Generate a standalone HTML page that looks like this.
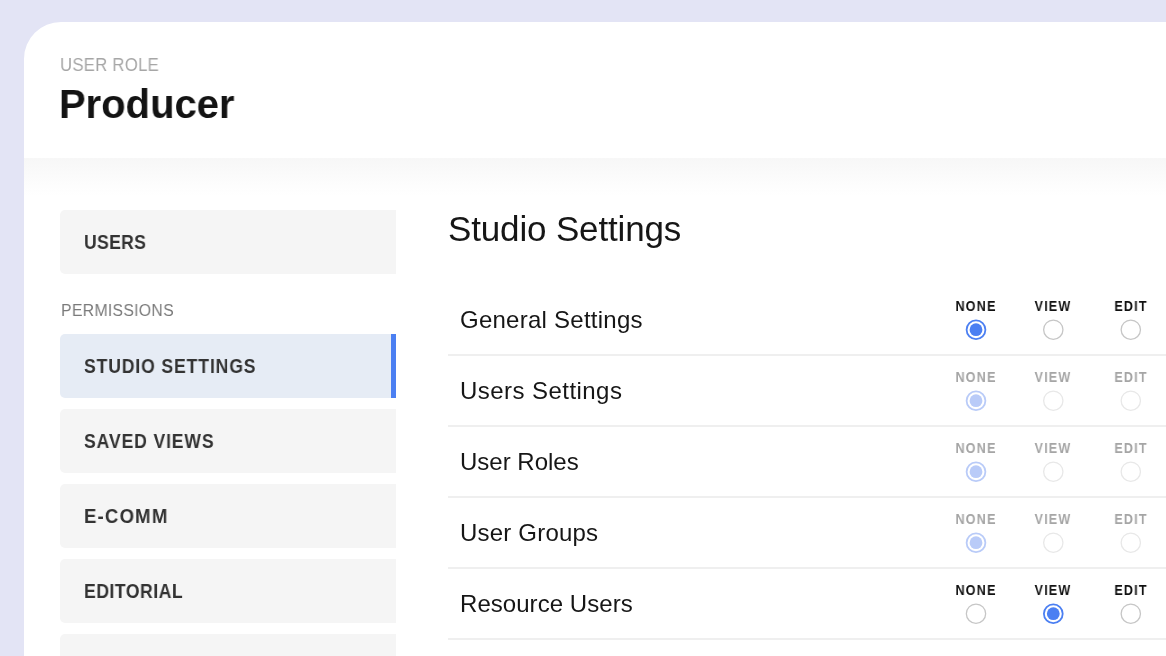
<!DOCTYPE html>
<html><head><meta charset="utf-8">
<style>
*{margin:0;padding:0;box-sizing:border-box}
html,body{width:1166px;height:656px;overflow:hidden}
body{background:#e3e4f5;font-family:"Liberation Sans",sans-serif;position:relative}
.card{position:absolute;left:24px;top:22px;width:1200px;height:700px;background:#fff;border-top-left-radius:37px;overflow:hidden}
.band{position:absolute;left:0;top:136px;width:100%;height:38px;background:linear-gradient(#f7f7f7,#fff)}
.abs{position:absolute;white-space:nowrap}
.t{will-change:transform}
.lbl{left:36px;top:32px;font-size:18.5px;color:#a6a6a6;line-height:22px;letter-spacing:0.3px;transform:scaleX(0.903);transform-origin:0 0}
.title{left:35px;top:59px;font-size:41px;font-weight:bold;color:#131313;line-height:46px;transform:scaleX(0.975);transform-origin:0 0}
.nav{position:absolute;left:36px;width:336px;height:64px;background:#f5f5f5;border-radius:5px 0 0 5px}
.nav span{position:absolute;left:24px;top:19.5px;font-weight:bold;font-size:19.5px;color:#333;line-height:24px;white-space:nowrap;transform-origin:0 0}
.nav.active{background:#e6ecf5}
.nav.active::after{content:"";position:absolute;right:0;top:0;width:5px;height:100%;background:#4b7ff2}
.perm{left:37px;top:278px;font-size:17.4px;color:#7a7a7a;line-height:20px;letter-spacing:0.3px;transform:scaleX(0.91);transform-origin:0 0}
.h2{left:424px;top:187px;font-size:35px;color:#161616;line-height:40px;letter-spacing:-0.15px}
.row{position:absolute;left:424px;width:800px;height:71px;border-bottom:2px solid #efefef}
.rname{position:absolute;left:12px;top:21px;font-size:24px;color:#161616;line-height:28px;white-space:nowrap}
.cl{position:absolute;top:13.5px;width:80px;font-size:14px;font-weight:bold;letter-spacing:1.3px;transform:scaleX(0.9);color:#111;line-height:15px;text-align:center;white-space:nowrap}
.rsvg{position:absolute;top:0;left:0}
.dis .cl{color:#a5a5a5}
</style></head><body>
<div class="card">
  <div class="band"></div>
  <div class="abs t lbl">USER ROLE</div>
  <div class="abs t title">Producer</div>
  <div class="nav" style="top:188px"><span class="t" style="letter-spacing:0.4px;transform:scaleX(0.9)">USERS</span></div>
  <div class="abs t perm">PERMISSIONS</div>
  <div class="nav active" style="top:312px"><span class="t" style="letter-spacing:1.0px;transform:scaleX(0.9)">STUDIO SETTINGS</span></div>
  <div class="nav" style="top:387px"><span class="t" style="letter-spacing:1.0px;transform:scaleX(0.9)">SAVED VIEWS</span></div>
  <div class="nav" style="top:462px"><span class="t" style="letter-spacing:1.28px;transform:scaleX(0.95)">E-COMM</span></div>
  <div class="nav" style="top:537px"><span class="t" style="letter-spacing:0.62px;transform:scaleX(0.9)">EDITORIAL</span></div>
  <div class="nav" style="top:612px"><span class="t" style="letter-spacing:0px;transform:scaleX(1)"></span></div>
  <div class="abs t h2">Studio Settings</div>
  <div class="row" style="top:263px">
    <div class="rname t" style="letter-spacing:0.25px">General Settings</div>
    <div class="cl t" style="left:487.70px">NONE</div>
    <div class="cl t" style="left:565.10px">VIEW</div>
    <div class="cl t" style="left:642.80px">EDIT</div>
    <svg class="rsvg" width="760" height="71"><circle cx="528" cy="44.7" r="9.4" fill="#fff" stroke="#4b7ff2" stroke-width="1.8"/><circle cx="528" cy="44.7" r="6.4" fill="#4b7ff2"/><circle cx="605.3" cy="44.7" r="9.65" fill="#fff" stroke="#c6c6c6" stroke-width="1.3"/><circle cx="682.8" cy="44.7" r="9.65" fill="#fff" stroke="#c6c6c6" stroke-width="1.3"/></svg>
  </div>
  <div class="row dis" style="top:334px">
    <div class="rname t" style="letter-spacing:0.45px">Users Settings</div>
    <div class="cl t" style="left:487.70px">NONE</div>
    <div class="cl t" style="left:565.10px">VIEW</div>
    <div class="cl t" style="left:642.80px">EDIT</div>
    <svg class="rsvg" width="760" height="71"><circle cx="528" cy="44.7" r="9.4" fill="#fff" stroke="#b9cbf8" stroke-width="1.8"/><circle cx="528" cy="44.7" r="6.4" fill="#b9cbf8"/><circle cx="605.3" cy="44.7" r="9.65" fill="#fff" stroke="#e8e8e8" stroke-width="1.3"/><circle cx="682.8" cy="44.7" r="9.65" fill="#fff" stroke="#e8e8e8" stroke-width="1.3"/></svg>
  </div>
  <div class="row dis" style="top:405px">
    <div class="rname t" style="letter-spacing:0px">User Roles</div>
    <div class="cl t" style="left:487.70px">NONE</div>
    <div class="cl t" style="left:565.10px">VIEW</div>
    <div class="cl t" style="left:642.80px">EDIT</div>
    <svg class="rsvg" width="760" height="71"><circle cx="528" cy="44.7" r="9.4" fill="#fff" stroke="#b9cbf8" stroke-width="1.8"/><circle cx="528" cy="44.7" r="6.4" fill="#b9cbf8"/><circle cx="605.3" cy="44.7" r="9.65" fill="#fff" stroke="#e8e8e8" stroke-width="1.3"/><circle cx="682.8" cy="44.7" r="9.65" fill="#fff" stroke="#e8e8e8" stroke-width="1.3"/></svg>
  </div>
  <div class="row dis" style="top:476px">
    <div class="rname t" style="letter-spacing:0.2px">User Groups</div>
    <div class="cl t" style="left:487.70px">NONE</div>
    <div class="cl t" style="left:565.10px">VIEW</div>
    <div class="cl t" style="left:642.80px">EDIT</div>
    <svg class="rsvg" width="760" height="71"><circle cx="528" cy="44.7" r="9.4" fill="#fff" stroke="#b9cbf8" stroke-width="1.8"/><circle cx="528" cy="44.7" r="6.4" fill="#b9cbf8"/><circle cx="605.3" cy="44.7" r="9.65" fill="#fff" stroke="#e8e8e8" stroke-width="1.3"/><circle cx="682.8" cy="44.7" r="9.65" fill="#fff" stroke="#e8e8e8" stroke-width="1.3"/></svg>
  </div>
  <div class="row" style="top:547px">
    <div class="rname t" style="letter-spacing:0.05px">Resource Users</div>
    <div class="cl t" style="left:487.70px">NONE</div>
    <div class="cl t" style="left:565.10px">VIEW</div>
    <div class="cl t" style="left:642.80px">EDIT</div>
    <svg class="rsvg" width="760" height="71"><circle cx="528" cy="44.7" r="9.65" fill="#fff" stroke="#c6c6c6" stroke-width="1.3"/><circle cx="605.3" cy="44.7" r="9.4" fill="#fff" stroke="#4b7ff2" stroke-width="1.8"/><circle cx="605.3" cy="44.7" r="6.4" fill="#4b7ff2"/><circle cx="682.8" cy="44.7" r="9.65" fill="#fff" stroke="#c6c6c6" stroke-width="1.3"/></svg>
  </div>
</div>
</body></html>
